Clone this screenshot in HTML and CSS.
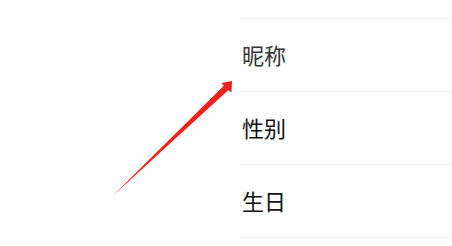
FILE: index.html
```html
<!DOCTYPE html>
<html lang="zh">
<head>
<meta charset="utf-8">
<link rel="stylesheet" href="styles.css">
</head>
<body>
<div class="page">
  <ul class="list">
    <li class="row row-muted">昵称</li>
    <li class="row">性别</li>
    <li class="row">生日</li>
  </ul>
  <svg class="arrow" width="452" height="246" viewBox="0 0 452 246">
    <polygon points="111.5,197 223.8,85.7 221.5,83 232,81 231.5,92.5 228.2,90.3" fill="#f0211a"/>
  </svg>
</div>
</body>
</html>
```
FILE: styles.css
```css
html, body {
  margin: 0;
  padding: 0;
  background: #ffffff;
}
.page {
  position: relative;
  width: 452px;
  height: 246px;
  overflow: hidden;
  font-family: "Noto Sans CJK SC", "Noto Sans", sans-serif;
}
.list {
  list-style: none;
  margin: 0 0 0 240px;
  padding: 18px 0 0 0;
}
.row {
  box-sizing: border-box;
  height: 73px;
  border-top: 1px solid #f1f1f1;
  display: flex;
  align-items: center;
  padding: 0 0 3px 2px;
  font-size: 22px;
  color: #111111;
}
.row:last-child {
  border-bottom: 1px solid #f1f1f1;
  height: 74px;
}
.row-muted {
  color: #333333;
}
.arrow {
  position: absolute;
  left: 0;
  top: 0;
}
```
